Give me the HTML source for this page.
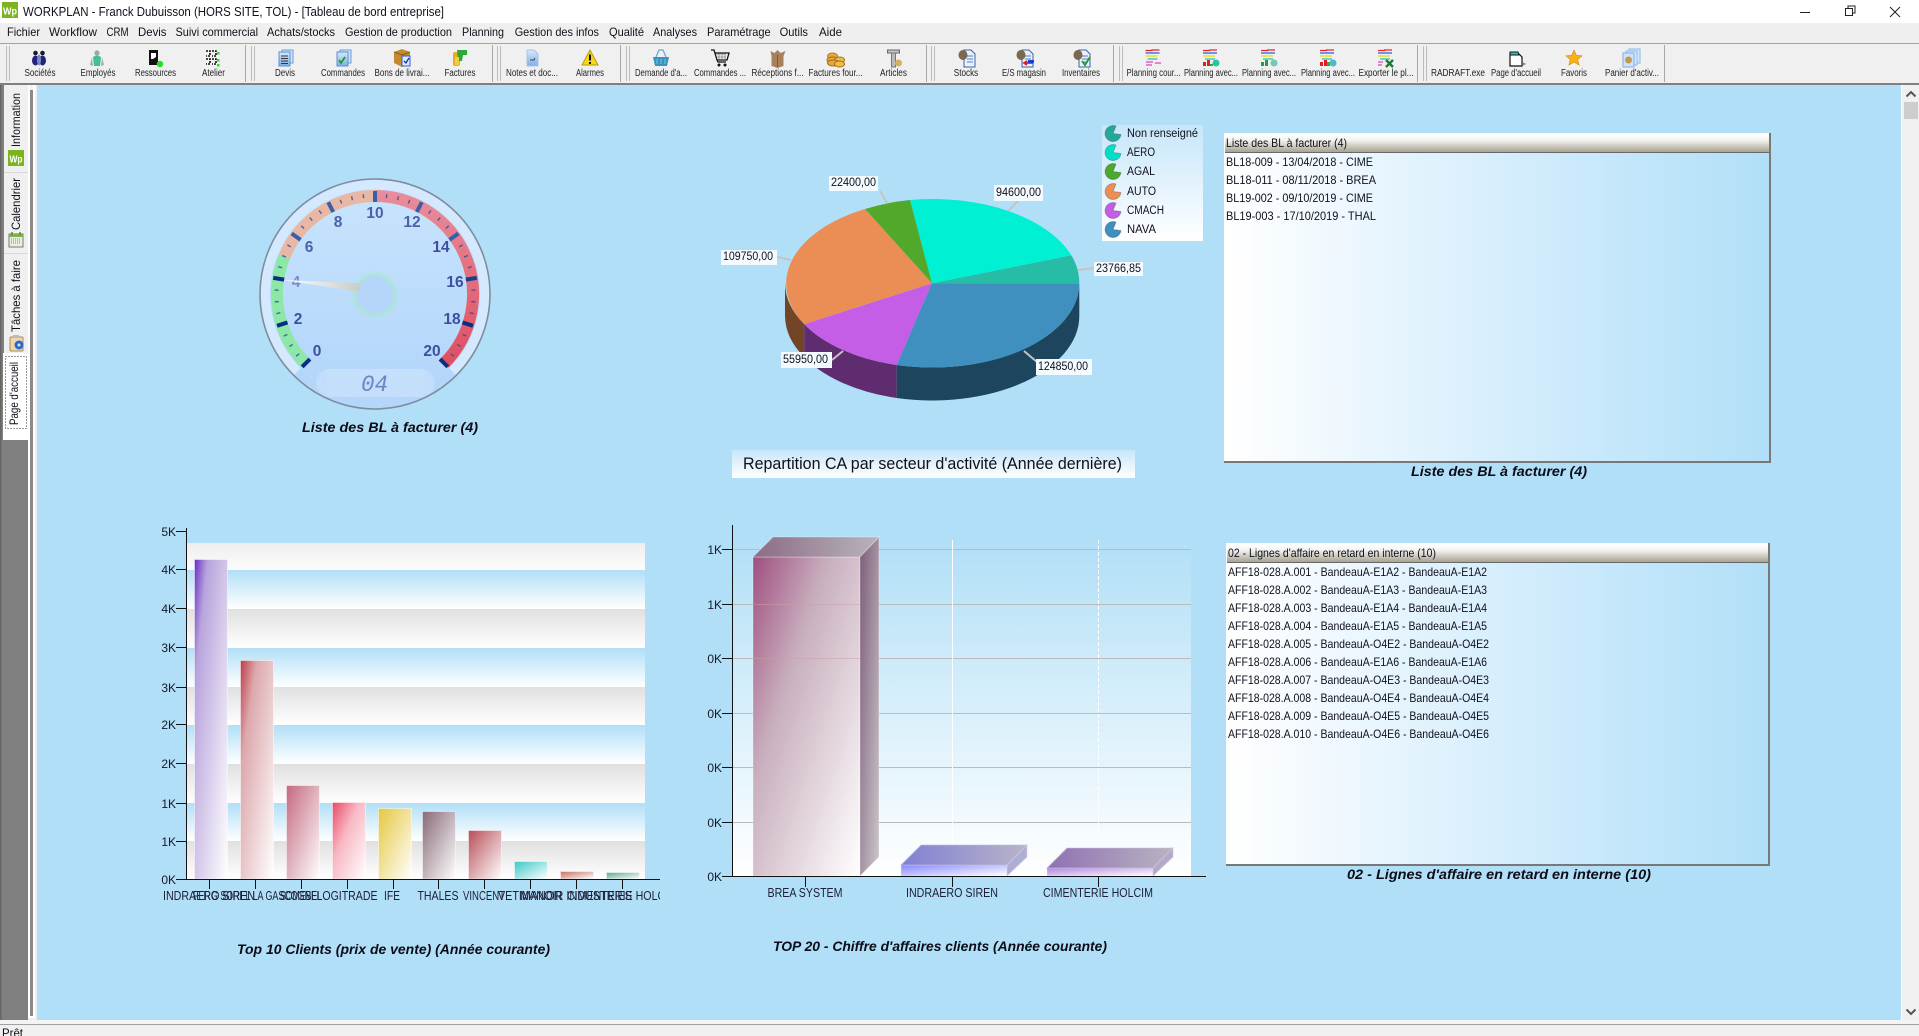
<!DOCTYPE html>
<html lang="fr"><head><meta charset="utf-8"><title>WORKPLAN - Tableau de bord entreprise</title>
<style>
html,body{margin:0;padding:0;background:#b1dff7;overflow:hidden}
svg{display:block}
text{font-family:"Liberation Sans",Arial,sans-serif;fill:#10101c}
.m{font-size:12px}
.t{font-size:10px;text-anchor:middle;fill:#222}
.l{font-size:12px}
.c{font-size:14px;font-weight:bold;font-style:italic;fill:#0c0c18}
.a{font-size:12px;text-anchor:end;fill:#181828}
.x{font-size:13px;text-anchor:middle;fill:#20203a}
.p{font-size:11.500px}
.g{font-size:15.500px;font-weight:bold;text-anchor:middle;fill:#3d50a0}
</style></head><body>
<svg xmlns="http://www.w3.org/2000/svg" width="1919" height="1036" viewBox="0 0 1919 1036">
<defs>
<linearGradient id="hdr" x1="0" y1="0" x2="0" y2="1"><stop offset="0" stop-color="#fff"/><stop offset=".35" stop-color="#f2f2f0"/><stop offset=".85" stop-color="#b8b4a4"/><stop offset="1" stop-color="#a8a498"/></linearGradient>
<linearGradient id="lst" x1="0" y1="0" x2="1" y2="0"><stop offset="0" stop-color="#fff"/><stop offset=".62" stop-color="#cdeafc"/><stop offset="1" stop-color="#b1dff7"/></linearGradient>
<linearGradient id="bw" x1="0" y1="0" x2="0" y2="1"><stop offset="0" stop-color="#c6e6fa"/><stop offset="1" stop-color="#fff"/></linearGradient>
<linearGradient id="gb" x1="0" y1="0" x2="0" y2="1"><stop offset="0" stop-color="#b1dff7"/><stop offset="1" stop-color="#fff"/></linearGradient>
<linearGradient id="gg" x1="0" y1="0" x2="0" y2="1"><stop offset="0" stop-color="#e0e0e0"/><stop offset="1" stop-color="#fff"/></linearGradient>
<linearGradient id="gg0" x1="0" y1="0" x2="0" y2="1"><stop offset="0" stop-color="#eeeeee"/><stop offset="1" stop-color="#fcfcfc"/></linearGradient>
<linearGradient id="b1" x1="0" y1="0" x2="1" y2="1"><stop offset="0" stop-color="#6a2fc4"/><stop offset=".2" stop-color="#b8a4dc"/><stop offset="1" stop-color="#fff"/></linearGradient>
<linearGradient id="b2" x1="0" y1="0" x2="1" y2="1"><stop offset="0" stop-color="#be3c48"/><stop offset=".25" stop-color="#dca8ac"/><stop offset="1" stop-color="#fff"/></linearGradient>
<linearGradient id="b3" x1="0" y1="0" x2="1" y2="1"><stop offset="0" stop-color="#c46a80"/><stop offset="1" stop-color="#fff"/></linearGradient>
<linearGradient id="b4" x1="0" y1="0" x2="1" y2="1"><stop offset="0" stop-color="#e84a68"/><stop offset=".4" stop-color="#f8b8c4"/><stop offset="1" stop-color="#fff"/></linearGradient>
<linearGradient id="b5" x1="0" y1="0" x2="1" y2="1"><stop offset="0" stop-color="#e4c840"/><stop offset="1" stop-color="#fff"/></linearGradient>
<linearGradient id="b6" x1="0" y1="0" x2="1" y2="1"><stop offset="0" stop-color="#886a78"/><stop offset="1" stop-color="#fff"/></linearGradient>
<linearGradient id="b7" x1="0" y1="0" x2="1" y2="1"><stop offset="0" stop-color="#b84f58"/><stop offset="1" stop-color="#fff"/></linearGradient>
<linearGradient id="b8" x1="0" y1="0" x2="1" y2="1"><stop offset="0" stop-color="#3cc8c8"/><stop offset="1" stop-color="#fff"/></linearGradient>
<linearGradient id="b9" x1="0" y1="0" x2="1" y2="1"><stop offset="0" stop-color="#c87060"/><stop offset="1" stop-color="#fff"/></linearGradient>
<linearGradient id="b10" x1="0" y1="0" x2="1" y2="1"><stop offset="0" stop-color="#60a890"/><stop offset="1" stop-color="#fff"/></linearGradient>
<linearGradient id="f1" x1="0" y1="0" x2="1" y2="1"><stop offset="0" stop-color="#a04f80"/><stop offset=".35" stop-color="#c8aebd"/><stop offset="1" stop-color="#fff"/></linearGradient>
<linearGradient id="t1" x1="0" y1="0" x2="1" y2="0"><stop offset="0" stop-color="#8c6c84"/><stop offset="1" stop-color="#b8b4bc"/></linearGradient>
<linearGradient id="s1" x1="0" y1="0" x2="1" y2="1"><stop offset="0" stop-color="#7c5c78"/><stop offset="1" stop-color="#ccc8cc"/></linearGradient>
<linearGradient id="f2" x1="0" y1="0" x2="1" y2="1"><stop offset="0" stop-color="#8888ff"/><stop offset="1" stop-color="#fff"/></linearGradient>
<linearGradient id="t2" x1="0" y1="0" x2="1" y2="0"><stop offset="0" stop-color="#8080d4"/><stop offset="1" stop-color="#b8b4c8"/></linearGradient>
<linearGradient id="f3" x1="0" y1="0" x2="1" y2="1"><stop offset="0" stop-color="#b088e0"/><stop offset="1" stop-color="#fff"/></linearGradient>
<linearGradient id="t3" x1="0" y1="0" x2="1" y2="0"><stop offset="0" stop-color="#9070b4"/><stop offset="1" stop-color="#b8b4c0"/></linearGradient>
<linearGradient id="red" gradientUnits="userSpaceOnUse" x1="0" y1="-100" x2="0" y2="75"><stop offset="0" stop-color="#e98d9b"/><stop offset="1" stop-color="#de4d5e"/></linearGradient>
<linearGradient id="face" x1="0" y1="0" x2="0" y2="1"><stop offset="0" stop-color="#c8e4fd"/><stop offset="1" stop-color="#b1d5fa"/></linearGradient>
<linearGradient id="ndl" x1="0" y1="0" x2="1" y2="0"><stop offset="0" stop-color="#fff"/><stop offset="1" stop-color="#c9cdc6"/></linearGradient>
<linearGradient id="docb" x1="0" y1="0" x2="0" y2="1"><stop offset="0" stop-color="#d5e8fb"/><stop offset="1" stop-color="#7fb0e6"/></linearGradient>
<clipPath id="cx"><rect x="150" y="880" width="510" height="30"/></clipPath>
<path id="pac" d="M0 0L3-7.4A8 8 0 1 0 8 1Z" stroke="#000" stroke-opacity=".2"/>
<rect id="mj" x="-2" y="-103" width="4" height="11"/>
<rect id="mn" x="-.7" y="-100.500" width="1.400" height="4"/>
<g id="stack"><rect x="-3" y="50" width="11" height="13" fill="#cfe2f8" stroke="#6d9fd8"/><rect x="-6" y="52" width="11" height="14" fill="url(#docb)" stroke="#5b8fd0"/></g>
<g id="plan"><path d="M-8 50.5h7M-2 50h8" stroke="#f02020" stroke-width="1.300"/><path d="M-8 53h5M-3 53h9" stroke="#2060e0" stroke-width="1.300"/><path d="M-8 56h12" stroke="#f0e020" stroke-width="1.500"/><path d="M-6 59h10" stroke="#20c8c0" stroke-width="1.300"/></g>
<g id="sdoc"><path d="M-2 50h7l4 4v13H-2z" fill="#e9f2fc" stroke="#3b62a8"/><path d="M1 56h6M1 59h6M1 62h6" stroke="#5a7cc0"/><ellipse cx="-3" cy="55" rx="4.500" ry="5" fill="#7a6850"/></g>
</defs>
<rect width="1919" height="1036" fill="#b1dff7"/>

<!-- title bar -->
<rect width="1919" height="23" fill="#fff"/>
<rect x="2" y="2" width="16" height="16" fill="#7ab51d"/>
<text x="3" y="14.5" style="font-size:10.5px;font-weight:bold;fill:#fff" textLength="14" lengthAdjust="spacingAndGlyphs">Wp</text>
<text x="23" y="16" style="font-size:12.5px" textLength="421" lengthAdjust="spacingAndGlyphs">WORKPLAN - Franck Dubuisson (HORS SITE, TOL) - [Tableau de bord entreprise]</text>
<path d="M1800 12.5h10" stroke="#222" stroke-width="1"/>
<path d="M1845.5 8.5h7v7h-7zM1848 8.5v-2.5h7v7h-2.5" fill="none" stroke="#222"/>
<path d="M1890 7l10 10M1900 7l-10 10" stroke="#222" stroke-width="1"/>

<!-- menu -->
<rect y="23" width="1919" height="20" fill="#efefef"/>
<rect y="43" width="1919" height="1" fill="#a4a4a4"/>
<g class="mn">
<text class="m" x="7" y="36" textLength="33" lengthAdjust="spacingAndGlyphs">Fichier</text>
<text class="m" x="49" y="36" textLength="48" lengthAdjust="spacingAndGlyphs">Workflow</text>
<text class="m" x="106.500" y="36" textLength="22" lengthAdjust="spacingAndGlyphs">CRM</text>
<text class="m" x="138" y="36" textLength="28.500" lengthAdjust="spacingAndGlyphs">Devis</text>
<text class="m" x="175.500" y="36" textLength="82.500" lengthAdjust="spacingAndGlyphs">Suivi commercial</text>
<text class="m" x="267" y="36" textLength="68" lengthAdjust="spacingAndGlyphs">Achats/stocks</text>
<text class="m" x="345" y="36" textLength="107" lengthAdjust="spacingAndGlyphs">Gestion de production</text>
<text class="m" x="462" y="36" textLength="42" lengthAdjust="spacingAndGlyphs">Planning</text>
<text class="m" x="514.700" y="36" textLength="84.300" lengthAdjust="spacingAndGlyphs">Gestion des infos</text>
<text class="m" x="609" y="36" textLength="35" lengthAdjust="spacingAndGlyphs">Qualité</text>
<text class="m" x="653" y="36" textLength="44" lengthAdjust="spacingAndGlyphs">Analyses</text>
<text class="m" x="707" y="36" textLength="63.600" lengthAdjust="spacingAndGlyphs">Paramétrage</text>
<text class="m" x="779.600" y="36" textLength="28.400" lengthAdjust="spacingAndGlyphs">Outils</text>
<text class="m" x="819" y="36" textLength="23" lengthAdjust="spacingAndGlyphs">Aide</text>
</g>

<!-- toolbar -->
<rect y="44" width="1919" height="39" fill="#f0f0f0"/>
<rect y="83" width="1919" height="2" fill="#808080"/>
<g fill="#a8a8a8">
<rect x="245" y="45" width="1" height="37"/><rect x="492" y="45" width="1" height="37"/><rect x="620" y="45" width="1" height="37"/><rect x="926" y="45" width="1" height="37"/><rect x="1113" y="45" width="1" height="37"/><rect x="1417" y="45" width="1" height="37"/><rect x="1664" y="45" width="1" height="37"/>
</g>
<g fill="#bcbcbc">
<rect x="6" y="46" width="1" height="35"/><rect x="9" y="46" width="1" height="35"/>
<rect x="251" y="46" width="1" height="35"/><rect x="254" y="46" width="1" height="35"/>
<rect x="497" y="46" width="1" height="35"/><rect x="500" y="46" width="1" height="35"/>
<rect x="626" y="46" width="1" height="35"/><rect x="629" y="46" width="1" height="35"/>
<rect x="931" y="46" width="1" height="35"/><rect x="934" y="46" width="1" height="35"/>
<rect x="1119" y="46" width="1" height="35"/><rect x="1122" y="46" width="1" height="35"/>
<rect x="1423" y="46" width="1" height="35"/><rect x="1426" y="46" width="1" height="35"/>
</g>

<!-- toolbar icons -->
<g transform="translate(39,0)"><ellipse cx="-3.500" cy="60.500" rx="3.500" ry="5" fill="#23237a"/><ellipse cx="3.500" cy="60.500" rx="3.500" ry="5" fill="#23237a"/><circle cx="-3.500" cy="53" r="2.300" fill="#1a1a2a"/><circle cx="3.500" cy="53" r="2.300" fill="#1a1a2a"/><ellipse cx="0" cy="60" rx="2" ry="5.500" fill="#7a8ac8"/></g>
<g transform="translate(97,0)"><circle cx="0" cy="53" r="2.600" fill="#9aa89e"/><path d="M-4 57q4-3 8 0l-1 9h-6z" fill="#3fbf9a"/><path d="M-5 57l-2 8 3 1zM5 57l2 8-3 1z" fill="#a8aca8"/></g>
<g transform="translate(155,0)"><path d="M-6 50h9v15h-9z" fill="#111"/><path d="M-4 53h5v4l-3 2h-2z" fill="#fff"/><circle cx="5" cy="64" r="3.200" fill="#28dd28"/></g>
<g transform="translate(213,0)" fill="none" stroke="#111" stroke-width="1.600"><path d="M-7 51h4v5h-4M-1 51h4v5h-4M-7 59h4v5h-4M-1 59h4v5h-4" stroke-dasharray="2 1"/><rect x="4" y="52" width="2.500" height="2.500" fill="#28dd28" stroke="none"/><rect x="4" y="59" width="2.500" height="2.500" fill="#28dd28" stroke="none"/><rect x="4" y="64" width="2.500" height="2.500" fill="#28dd28" stroke="none"/></g>
<g transform="translate(285,0)"><use href="#stack"/><path d="M-4 56h7M-4 58.500h7M-4 61h7M-4 63.500h7" stroke="#334"/></g>
<g transform="translate(343,0)"><use href="#stack"/><path d="M-4 60l2 3 4-6" fill="none" stroke="#1a9a2a" stroke-width="1.800"/></g>
<g transform="translate(402,0)"><path d="M-8 52l8-3 8 3v11l-8 4-8-4z" fill="#c48a30"/><path d="M-8 52l8 3 8-3" fill="none" stroke="#8a5c18"/><rect x="0" y="56" width="8" height="10" fill="#dfeafa" stroke="#3060c0"/><path d="M2 61l2 2 3-5" fill="none" stroke="#1030b0" stroke-width="1.300"/></g>
<g transform="translate(460,0)"><rect x="-7" y="52" width="7" height="14" rx="2" fill="#e6ad20"/><path d="M-3 50h10v5h-4l-1 6h-4z" fill="#2fa83a"/><rect x="-5" y="57" width="4" height="8" fill="#f4cc40"/></g>
<g transform="translate(532,0)"><path d="M-5 50h7l4 4v12H-5z" fill="url(#docb)" stroke="#a9c4e6"/><path d="M-2 60h4l1-2" fill="none" stroke="#445"/></g>
<g transform="translate(590,0)"><path d="M0 50L8 65H-8z" fill="#f6d816" stroke="#b89a10"/><rect x="-1" y="54.500" width="2" height="6" fill="#111"/><rect x="-1" y="62" width="2" height="2" fill="#111"/></g>
<g transform="translate(661,0)"><path d="M-8 57h16l-2 9H-6z" fill="#3a94c0"/><path d="M-5 57l3-7h4l3 7" fill="none" stroke="#6aaccc" stroke-width="1.300"/><path d="M-4 59v5M0 59v5M4 59v5" stroke="#7cc0e0"/></g>
<g transform="translate(720,0)"><path d="M-9 50h3l3 10h10l2-7H-5M-3 60l1 2h8" fill="none" stroke="#111" stroke-width="1.300"/><path d="M-4 54h10M-3 57h9M-1 53v7M2 53v7M5 53v7" stroke="#666" stroke-width=".6"/><circle cx="-1" cy="65" r="1.500" fill="#111"/><circle cx="5" cy="65" r="1.500" fill="#111"/></g>
<g transform="translate(777.500,0)"><path d="M-7 51l4 2 3-3 3 3 5-2-2 5v10l-6 2-6-2V56z" fill="#a8805a"/><path d="M0 55v12" stroke="#7a5a3c"/></g>
<g transform="translate(835.500,0)"><ellipse cx="-3" cy="56" rx="5" ry="3" fill="#e4a93a" stroke="#b8801c"/><ellipse cx="-3" cy="60" rx="5.500" ry="3" fill="#e4a93a" stroke="#a87018"/><ellipse cx="4" cy="60" rx="5" ry="3" fill="#eebc4a" stroke="#a87018"/><ellipse cx="-2" cy="63" rx="6" ry="3" fill="#e4a93a" stroke="#a87018"/><ellipse cx="4" cy="64" rx="5" ry="3" fill="#eebc4a" stroke="#a87018"/></g>
<g transform="translate(893.500,0)"><path d="M-6 50h12v3H-6z" fill="#c4c4c4" stroke="#666"/><path d="M-2 53h4v14h-4z" fill="#bbb" stroke="#777"/><circle cx="5" cy="63" r="3.500" fill="#d4b060"/></g>
<use href="#sdoc" x="966"/>
<g transform="translate(1024,0)"><use href="#sdoc"/><path d="M1 63h8M3 61l-3 2 3 2" stroke="#e02020" stroke-width="1.800" fill="none"/><rect x="4" y="60" width="6" height="3" fill="#1a40d0"/></g>
<g transform="translate(1081,0)"><use href="#sdoc"/><path d="M1 61l3 4 5-8" fill="none" stroke="#1c9a2a" stroke-width="1.800"/></g>
<use href="#plan" x="1153.500"/><path d="M1146 62h7M1146 65h6M1155 63h6" stroke="#e040c0" stroke-width="1.300"/>
<g transform="translate(1211,0)"><use href="#plan"/><path d="M-8 62h3v4h-3zM-4 60h3v6h-3z" fill="#e02020"/><path d="M-1 64h3v2h-3z" fill="#20b040"/><circle cx="5" cy="63" r="3.500" fill="#30c0a8"/></g>
<g transform="translate(1269,0)"><use href="#plan"/><path d="M-8 62h3v4h-3zM-4 60h3v6h-3z" fill="#20a040"/><circle cx="5" cy="63" r="3.500" fill="#70c8b8"/></g>
<g transform="translate(1328,0)"><use href="#plan"/><path d="M-8 62h3v4h-3zM-4 60h3v6h-3z" fill="#e02020"/><path d="M-1 62h3v4h-3z" fill="#20b040"/><circle cx="5" cy="63" r="3.500" fill="#50b8c8"/></g>
<g transform="translate(1386,0)"><use href="#plan"/><path d="M-8 62h5M-8 65h4" stroke="#e040c0" stroke-width="1.300"/><path d="M0 60l7 7M7 60l-7 7" stroke="#1c7a2a" stroke-width="2.400"/></g>
<g transform="translate(1516,0)"><path d="M-6 54h9l3 3v9h-12z" fill="#fff" stroke="#111" stroke-width="1.200"/><path d="M-6 52h8l1 3h-9z" fill="#20c8c8" stroke="#111"/><path d="M7 63l2 1-2 1" stroke="#777" fill="none"/></g>
<path d="M1574 50l2.300 5.300 5.700.500-4.300 3.700 1.400 5.600-5.100-3-5.100 3 1.400-5.600-4.300-3.700 5.700-.500z" fill="#f6b21a" stroke="#d88a10" stroke-width=".6"/>
<g transform="translate(1632,0)"><rect x="-3" y="49" width="11" height="14" fill="#d8e8fa" stroke="#8ab8ec"/><rect x="-6" y="51" width="11" height="14" fill="#d8e8fa" stroke="#8ab8ec"/><rect x="-9" y="53" width="11" height="14" fill="#cfe2f8" stroke="#7cace4"/><circle cx="-3.500" cy="60" r="3.500" fill="#c09a50"/></g>

<g>
<text class="t" x="40" y="76" textLength="31" lengthAdjust="spacingAndGlyphs">Sociétés</text>
<text class="t" x="98" y="76" textLength="35" lengthAdjust="spacingAndGlyphs">Employés</text>
<text class="t" x="155.500" y="76" textLength="41" lengthAdjust="spacingAndGlyphs">Ressources</text>
<text class="t" x="213.500" y="76" textLength="23" lengthAdjust="spacingAndGlyphs">Atelier</text>
<text class="t" x="285" y="76" textLength="20" lengthAdjust="spacingAndGlyphs">Devis</text>
<text class="t" x="343" y="76" textLength="44" lengthAdjust="spacingAndGlyphs">Commandes</text>
<text class="t" x="402" y="76" textLength="55" lengthAdjust="spacingAndGlyphs">Bons de livrai...</text>
<text class="t" x="460" y="76" textLength="31" lengthAdjust="spacingAndGlyphs">Factures</text>
<text class="t" x="532" y="76" textLength="52" lengthAdjust="spacingAndGlyphs">Notes et doc...</text>
<text class="t" x="590" y="76" textLength="28" lengthAdjust="spacingAndGlyphs">Alarmes</text>
<text class="t" x="661" y="76" textLength="52" lengthAdjust="spacingAndGlyphs">Demande d'a...</text>
<text class="t" x="720" y="76" textLength="52" lengthAdjust="spacingAndGlyphs">Commandes ...</text>
<text class="t" x="777.500" y="76" textLength="52" lengthAdjust="spacingAndGlyphs">Réceptions f...</text>
<text class="t" x="835.500" y="76" textLength="54" lengthAdjust="spacingAndGlyphs">Factures four...</text>
<text class="t" x="893.500" y="76" textLength="27" lengthAdjust="spacingAndGlyphs">Articles</text>
<text class="t" x="966" y="76" textLength="24.500" lengthAdjust="spacingAndGlyphs">Stocks</text>
<text class="t" x="1024" y="76" textLength="44" lengthAdjust="spacingAndGlyphs">E/S magasin</text>
<text class="t" x="1081" y="76" textLength="38" lengthAdjust="spacingAndGlyphs">Inventaires</text>
<text class="t" x="1153.500" y="76" textLength="54" lengthAdjust="spacingAndGlyphs">Planning cour...</text>
<text class="t" x="1211" y="76" textLength="54" lengthAdjust="spacingAndGlyphs">Planning avec...</text>
<text class="t" x="1269" y="76" textLength="54" lengthAdjust="spacingAndGlyphs">Planning avec...</text>
<text class="t" x="1328" y="76" textLength="54" lengthAdjust="spacingAndGlyphs">Planning avec...</text>
<text class="t" x="1386" y="76" textLength="55" lengthAdjust="spacingAndGlyphs">Exporter le pl...</text>
<text class="t" x="1458" y="76" textLength="54" lengthAdjust="spacingAndGlyphs">RADRAFT.exe</text>
<text class="t" x="1516" y="76" textLength="50" lengthAdjust="spacingAndGlyphs">Page d'accueil</text>
<text class="t" x="1574" y="76" textLength="26" lengthAdjust="spacingAndGlyphs">Favoris</text>
<text class="t" x="1632" y="76" textLength="54" lengthAdjust="spacingAndGlyphs">Panier d'activ...</text>
</g>

<!-- left tabs -->
<rect x="0" y="85" width="37" height="935" fill="#f0f0f0"/>
<rect x="0" y="85" width="28" height="935" fill="#808080"/>
<rect x="0" y="85" width="1.500" height="935" fill="#666"/>
<rect x="28" y="85" width="2" height="933" fill="#fff"/>
<rect x="30" y="90" width="3" height="926" fill="#8a8a8a"/>
<rect x="33" y="85" width="2" height="933" fill="#fff"/>
<rect x="28" y="1016" width="7" height="2" fill="#fff"/>
<rect x="4" y="85" width="24" height="268" fill="#f0f0f0"/>
<rect x="4" y="172" width="24" height="1" fill="#d8d8d8"/>
<rect x="4" y="253" width="24" height="1" fill="#d8d8d8"/>
<rect x="3" y="353" width="26" height="87" fill="#fff"/>
<rect x="5.500" y="356.500" width="21" height="72" fill="none" stroke="#333" stroke-dasharray="1 2"/>
<text class="l" transform="translate(20,147) rotate(-90)" textLength="54" lengthAdjust="spacingAndGlyphs">Information</text>
<text class="l" transform="translate(20,230) rotate(-90)" textLength="52" lengthAdjust="spacingAndGlyphs">Calendrier</text>
<text class="l" transform="translate(20,332) rotate(-90)" textLength="72" lengthAdjust="spacingAndGlyphs">Tâches à faire</text>
<text class="l" transform="translate(18,425) rotate(-90)" textLength="63" lengthAdjust="spacingAndGlyphs">Page d'accueil</text>
<rect x="8" y="150" width="16" height="16" fill="#7ab51d"/>
<text x="9.500" y="162.500" style="font-size:10px;font-weight:bold;fill:#fff" textLength="13" lengthAdjust="spacingAndGlyphs">Wp</text>
<rect x="9" y="234" width="14" height="13" fill="#e8f0e4" stroke="#777"/><rect x="9" y="234" width="14" height="3" fill="#7fb050"/><path d="M11 239h10M11 241h10M11 243h10" stroke="#8a8a8a" stroke-dasharray="1 1"/><path d="M12 232v3M20 232v3" stroke="#5a8a3a" stroke-width="1.500"/>
<rect x="10" y="337" width="13" height="14" rx="1" fill="#eed6a8" stroke="#a88a5a"/><rect x="13" y="335" width="6" height="3" fill="#b8b8c8"/><circle cx="19" cy="345" r="4.500" fill="#2a6ac8"/><circle cx="19" cy="345" r="1.500" fill="#cfe2fa"/>

<!-- scrollbar and bottom -->
<rect x="1901" y="85" width="18" height="935" fill="#f0f0f0"/>
<rect x="1901" y="85" width="1" height="935" fill="#fff"/>
<rect x="1904" y="102" width="14" height="17" fill="#cdcdcd"/>
<path d="M1906.500 96.500l4.500-4.500 4.500 4.500" fill="none" stroke="#555" stroke-width="2"/>
<path d="M1906.500 1009.500l4.500 4.500 4.500-4.500" fill="none" stroke="#555" stroke-width="2"/>
<rect y="1020" width="1919" height="4" fill="#f4f4f4"/>
<rect y="1024" width="1919" height="1" fill="#a0a0a0"/>
<rect y="1025" width="1919" height="11" fill="#f0f0f0"/>
<text x="2" y="1037" style="font-size:12px" textLength="21" lengthAdjust="spacingAndGlyphs">Prêt</text>

<!-- gauge -->
<circle cx="375" cy="294" r="115" fill="#d4e9fe"/>
<circle cx="375" cy="294" r="105" fill="url(#face)"/>
<path d="M297.200 371.800A110 110 0 0 0 452.800 371.800" fill="none" stroke="#b3d6fa" stroke-width="10"/>
<circle cx="375" cy="294" r="115" fill="none" stroke="#7d8c9e" stroke-width="1.600"/>
<g transform="translate(375,294)">
<g fill="none" stroke-width="12">
<path d="M-69.300 69.300A98 98 0 0 1-90.500-37.500" stroke="#8de8a8"/>
<path d="M-90.500-37.500A98 98 0 0 1 0-98" stroke="#e8b8a4"/>
<path d="M0-98A98 98 0 0 1 69.300 69.300" stroke="url(#red)"/>
</g>
<g fill="#0a2e84">
<use href="#mj" transform="rotate(-135)"/><use href="#mj" transform="rotate(-108)"/><use href="#mj" transform="rotate(-81)"/>
<use href="#mj" transform="rotate(108)"/><use href="#mj" transform="rotate(135)"/><use href="#mj" transform="rotate(81)" fill="#17408f"/>
</g>
<g fill="#3a5faa">
<use href="#mj" transform="rotate(-54)"/><use href="#mj" transform="rotate(-27)"/><use href="#mj" transform="rotate(0)"/><use href="#mj" transform="rotate(27)"/><use href="#mj" transform="rotate(54)"/>
</g>
<g fill="#2a4a9c" fill-opacity=".8">
<use href="#mn" transform="rotate(-128.250)"/><use href="#mn" transform="rotate(-121.500)"/><use href="#mn" transform="rotate(-114.750)"/>
<use href="#mn" transform="rotate(-101.250)"/><use href="#mn" transform="rotate(-94.500)"/><use href="#mn" transform="rotate(-87.750)"/>
<use href="#mn" transform="rotate(-74.250)"/><use href="#mn" transform="rotate(-67.500)"/><use href="#mn" transform="rotate(-60.750)"/>
<use href="#mn" transform="rotate(-47.250)"/><use href="#mn" transform="rotate(-40.500)"/><use href="#mn" transform="rotate(-33.750)"/>
<use href="#mn" transform="rotate(-20.250)"/><use href="#mn" transform="rotate(-13.500)"/><use href="#mn" transform="rotate(-6.750)"/>
<use href="#mn" transform="rotate(6.750)"/><use href="#mn" transform="rotate(13.500)"/><use href="#mn" transform="rotate(20.250)"/>
<use href="#mn" transform="rotate(33.750)"/><use href="#mn" transform="rotate(40.500)"/><use href="#mn" transform="rotate(47.250)"/>
<use href="#mn" transform="rotate(60.750)"/><use href="#mn" transform="rotate(67.500)"/><use href="#mn" transform="rotate(74.250)"/>
<use href="#mn" transform="rotate(87.750)"/><use href="#mn" transform="rotate(94.500)"/><use href="#mn" transform="rotate(101.250)"/>
<use href="#mn" transform="rotate(114.750)"/><use href="#mn" transform="rotate(121.500)"/><use href="#mn" transform="rotate(128.250)"/>
</g>
</g>
<g>
<text class="g" x="317" y="356">0</text><text class="g" x="298" y="324">2</text><text class="g" x="296" y="287" style="fill:#7f8fc4">4</text><text class="g" x="309" y="252" style="fill:#4a62a8">6</text><text class="g" x="338" y="227" style="fill:#4a62a8">8</text><text class="g" x="375" y="218" style="fill:#4a62a8">10</text><text class="g" x="412" y="227" style="fill:#4a62a8">12</text><text class="g" x="441" y="252" style="fill:#3d50a0">14</text><text class="g" x="455" y="287">16</text><text class="g" x="452" y="324">18</text><text class="g" x="432" y="356">20</text>
</g>
<circle cx="375" cy="295" r="20.300" fill="#b5d5fb" stroke="#a8e8cc" stroke-opacity=".45" stroke-width="6"/>
<path d="M283 280L360 283.300V291.700Z" fill="url(#ndl)"/>
<rect x="316" y="369" width="119" height="28" rx="14" fill="#fff" fill-opacity=".18"/>
<rect x="327" y="369" width="97" height="28" fill="#fff" fill-opacity=".07"/>
<text x="361" y="391" style="font-family:'Liberation Mono',monospace;font-size:23px;font-style:italic;fill:#5a74ba;fill-opacity:.85" textLength="27" lengthAdjust="spacingAndGlyphs">04</text>
<text class="c" x="302" y="432" textLength="176" lengthAdjust="spacingAndGlyphs">Liste des BL à facturer (4)</text>

<!-- pie -->
<path d="M785 283.300V316.300A147 84.300 0 0 0 804.300 357.300V324.300A147 84.300 0 0 1 785 283.300Z" fill="#734526"/>
<path d="M804.300 324.300V357.300A147 84.300 0 0 0 896.700 398V365A147 84.300 0 0 1 804.300 324.300Z" fill="#5f2c70"/>
<path d="M896.700 365V398A147 84.300 0 0 0 1079.300 316.300V283.300A147 84.300 0 0 1 896.700 365Z" fill="#1d465e"/>
<path d="M932 283.300L1079.300 283.300A147 84.300 0 0 0 1071.300 255.300Z" fill="#26bca5"/>
<path d="M932 283.300L1071.300 255.300A147 84.300 0 0 0 910 200Z" fill="#00f0d4"/>
<path d="M932 283.300L910 200A147 84.300 0 0 0 865 209Z" fill="#52a82a"/>
<path d="M932 283.300L865 209A147 84.300 0 0 0 804.300 324.300Z" fill="#ea8e56"/>
<path d="M932 283.300L804.300 324.300A147 84.300 0 0 0 896.700 365Z" fill="#c45ee6"/>
<path d="M932 283.300L896.700 365A147 84.300 0 0 0 1079.300 283.300Z" fill="#3f8fbf"/>
<g stroke="#c4c4c4" stroke-width="2" fill="none"><path d="M1078 270l16-2"/><path d="M1008 211l11-11"/><path d="M887 203l-7-12"/><path d="M791 260l-14-3"/><path d="M843 351l-11 9"/><path d="M1024 351l13 11"/></g>
<g fill="#f4fbff"><rect x="1094" y="262" width="49" height="14"/><rect x="994" y="185" width="49" height="16"/><rect x="829" y="176" width="49" height="15"/><rect x="721" y="250" width="56" height="15"/><rect x="781" y="352" width="51" height="16"/><rect x="1036" y="359" width="56" height="16"/></g>
<g>
<text class="p" x="1096" y="272" textLength="45" lengthAdjust="spacingAndGlyphs">23766,85</text>
<text class="p" x="996" y="196" textLength="45" lengthAdjust="spacingAndGlyphs">94600,00</text>
<text class="p" x="831" y="186" textLength="45" lengthAdjust="spacingAndGlyphs">22400,00</text>
<text class="p" x="723" y="260" textLength="50" lengthAdjust="spacingAndGlyphs">109750,00</text>
<text class="p" x="783" y="363" textLength="45" lengthAdjust="spacingAndGlyphs">55950,00</text>
<text class="p" x="1038" y="370" textLength="50" lengthAdjust="spacingAndGlyphs">124850,00</text>
</g>
<rect x="1102" y="125" width="101" height="116" fill="url(#bw)"/>
<use href="#pac" x="1113" y="133.500" fill="#26a898"/><use href="#pac" x="1113" y="152.500" fill="#00e0c8"/><use href="#pac" x="1113" y="171.500" fill="#4ea82a"/><use href="#pac" x="1113" y="191.500" fill="#ea8e56"/><use href="#pac" x="1113" y="210.500" fill="#c45ee6"/><use href="#pac" x="1113" y="229.500" fill="#3f8fbf"/>
<g>
<text class="p" x="1127" y="137" textLength="71" lengthAdjust="spacingAndGlyphs">Non renseigné</text>
<text class="p" x="1127" y="156" textLength="28" lengthAdjust="spacingAndGlyphs">AERO</text>
<text class="p" x="1127" y="175" textLength="28" lengthAdjust="spacingAndGlyphs">AGAL</text>
<text class="p" x="1127" y="195" textLength="29" lengthAdjust="spacingAndGlyphs">AUTO</text>
<text class="p" x="1127" y="214" textLength="37" lengthAdjust="spacingAndGlyphs">CMACH</text>
<text class="p" x="1127" y="233" textLength="29" lengthAdjust="spacingAndGlyphs">NAVA</text>
</g>
<rect x="732" y="450" width="403" height="28" fill="url(#bw)"/>
<text x="743" y="469" style="font-size:16.500px" textLength="379" lengthAdjust="spacingAndGlyphs">Repartition CA par secteur d'activité (Année dernière)</text>

<!-- lists -->
<rect x="1224" y="133" width="547" height="330" fill="#fff"/>
<rect x="1225" y="153" width="544" height="308" fill="url(#lst)"/>
<rect x="1225" y="134" width="544" height="18" fill="url(#hdr)"/>
<rect x="1225" y="152" width="544" height="1" fill="#686868"/>
<rect x="1769" y="133" width="2" height="330" fill="#787878"/>
<rect x="1224" y="461" width="547" height="2" fill="#787878"/>
<text class="l" x="1226" y="147" textLength="121" lengthAdjust="spacingAndGlyphs">Liste des BL à facturer (4)</text>
<g>
<text class="l" x="1226" y="166" textLength="147" lengthAdjust="spacingAndGlyphs">BL18-009 - 13/04/2018 - CIME</text>
<text class="l" x="1226" y="184" textLength="150" lengthAdjust="spacingAndGlyphs">BL18-011 - 08/11/2018 - BREA</text>
<text class="l" x="1226" y="202" textLength="147" lengthAdjust="spacingAndGlyphs">BL19-002 - 09/10/2019 - CIME</text>
<text class="l" x="1226" y="220" textLength="150" lengthAdjust="spacingAndGlyphs">BL19-003 - 17/10/2019 - THAL</text>
</g>
<text class="c" x="1411" y="476" textLength="176" lengthAdjust="spacingAndGlyphs">Liste des BL à facturer (4)</text>

<rect x="1226" y="543" width="544" height="323" fill="#fff"/>
<rect x="1227" y="563" width="541" height="301" fill="url(#lst)"/>
<rect x="1227" y="544" width="541" height="18" fill="url(#hdr)"/>
<rect x="1227" y="562" width="541" height="1" fill="#686868"/>
<rect x="1768" y="543" width="2" height="323" fill="#787878"/>
<rect x="1226" y="864" width="544" height="2" fill="#787878"/>
<text class="l" x="1228" y="557" textLength="208" lengthAdjust="spacingAndGlyphs">02 - Lignes d'affaire en retard en interne (10)</text>
<g>
<text class="l" x="1228" y="576" textLength="259" lengthAdjust="spacingAndGlyphs">AFF18-028.A.001 - BandeauA-E1A2 - BandeauA-E1A2</text>
<text class="l" x="1228" y="594" textLength="259" lengthAdjust="spacingAndGlyphs">AFF18-028.A.002 - BandeauA-E1A3 - BandeauA-E1A3</text>
<text class="l" x="1228" y="612" textLength="259" lengthAdjust="spacingAndGlyphs">AFF18-028.A.003 - BandeauA-E1A4 - BandeauA-E1A4</text>
<text class="l" x="1228" y="630" textLength="259" lengthAdjust="spacingAndGlyphs">AFF18-028.A.004 - BandeauA-E1A5 - BandeauA-E1A5</text>
<text class="l" x="1228" y="648" textLength="261" lengthAdjust="spacingAndGlyphs">AFF18-028.A.005 - BandeauA-O4E2 - BandeauA-O4E2</text>
<text class="l" x="1228" y="666" textLength="259" lengthAdjust="spacingAndGlyphs">AFF18-028.A.006 - BandeauA-E1A6 - BandeauA-E1A6</text>
<text class="l" x="1228" y="684" textLength="261" lengthAdjust="spacingAndGlyphs">AFF18-028.A.007 - BandeauA-O4E3 - BandeauA-O4E3</text>
<text class="l" x="1228" y="702" textLength="261" lengthAdjust="spacingAndGlyphs">AFF18-028.A.008 - BandeauA-O4E4 - BandeauA-O4E4</text>
<text class="l" x="1228" y="720" textLength="261" lengthAdjust="spacingAndGlyphs">AFF18-028.A.009 - BandeauA-O4E5 - BandeauA-O4E5</text>
<text class="l" x="1228" y="738" textLength="261" lengthAdjust="spacingAndGlyphs">AFF18-028.A.010 - BandeauA-O4E6 - BandeauA-O4E6</text>
</g>
<text class="c" x="1347" y="879" textLength="304" lengthAdjust="spacingAndGlyphs">02 - Lignes d'affaire en retard en interne (10)</text>

<!-- bar chart 1 -->
<rect x="187" y="543" width="458" height="27" fill="url(#gg0)"/>
<rect x="187" y="570" width="458" height="39" fill="url(#gb)"/>
<rect x="187" y="609" width="458" height="39" fill="url(#gg)"/>
<rect x="187" y="648" width="458" height="39" fill="url(#gb)"/>
<rect x="187" y="687" width="458" height="38" fill="url(#gg)"/>
<rect x="187" y="725" width="458" height="39" fill="url(#gb)"/>
<rect x="187" y="764" width="458" height="39" fill="url(#gg)"/>
<rect x="187" y="803" width="458" height="38" fill="url(#gb)"/>
<rect x="187" y="841" width="458" height="38" fill="url(#gg)"/>
<g stroke="#fff" stroke-opacity=".45">
<rect x="194.500" y="559.500" width="33" height="319.500" fill="url(#b1)"/>
<rect x="240.500" y="660.500" width="33" height="218.500" fill="url(#b2)"/>
<rect x="286.500" y="785.500" width="33" height="93.500" fill="url(#b3)"/>
<rect x="332.500" y="802.500" width="33" height="76.500" fill="url(#b4)"/>
<rect x="378.500" y="808.500" width="33" height="70.500" fill="url(#b5)"/>
<rect x="422.500" y="811.500" width="33" height="67.500" fill="url(#b6)"/>
<rect x="468.500" y="830.500" width="33" height="48.500" fill="url(#b7)"/>
<rect x="514.500" y="861.500" width="33" height="17.500" fill="url(#b8)"/>
<rect x="560.500" y="871.500" width="33" height="7.500" fill="url(#b9)"/>
<rect x="606.500" y="872.500" width="33" height="6.500" fill="url(#b10)"/>
</g>
<g stroke="#111" stroke-width="1" fill="none">
<path d="M186.500 528V879.500H660"/>
<path d="M176 531.500h10M176 569.500h10M176 608.500h10M176 647.500h10M176 687.500h10M176 724.500h10M176 763.500h10M176 803.500h10M176 841.500h10M176 879.500h10"/>
<path d="M209.500 880v9M255.500 880v9M301.500 880v9M347.500 880v9M393.500 880v9M438.500 880v9M484.500 880v9M530.500 880v9M576.500 880v9M622.500 880v9"/>
</g>
<g>
<text class="a" x="176" y="536">5K</text><text class="a" x="176" y="574">4K</text><text class="a" x="176" y="613">4K</text><text class="a" x="176" y="652">3K</text><text class="a" x="176" y="692">3K</text><text class="a" x="176" y="729">2K</text><text class="a" x="176" y="768">2K</text><text class="a" x="176" y="808">1K</text><text class="a" x="176" y="846">1K</text><text class="a" x="176" y="884">0K</text>
</g>
<g clip-path="url(#cx)">
<text class="x" x="209" y="900" textLength="92" lengthAdjust="spacingAndGlyphs">INDRAERO SIREN</text>
<text class="x" x="255" y="900" textLength="124" lengthAdjust="spacingAndGlyphs">FERG SOREL LA GASCOGNE</text>
<text class="x" x="301" y="900" textLength="42" lengthAdjust="spacingAndGlyphs">SOMEBEL</text>
<text class="x" x="347" y="900" textLength="61" lengthAdjust="spacingAndGlyphs">LOGITRADE</text>
<text class="x" x="392" y="900" textLength="16" lengthAdjust="spacingAndGlyphs">IFE</text>
<text class="x" x="438" y="900" textLength="41" lengthAdjust="spacingAndGlyphs">THALES</text>
<text class="x" x="484" y="900" textLength="42" lengthAdjust="spacingAndGlyphs">VINCENT</text>
<text class="x" x="530" y="900" textLength="64" lengthAdjust="spacingAndGlyphs">VETIMANOR</text>
<text class="x" x="576" y="900" textLength="112" lengthAdjust="spacingAndGlyphs">MANOIR INDUSTRIES</text>
<text class="x" x="622" y="900" textLength="110" lengthAdjust="spacingAndGlyphs">CIMENTERIE HOLCIM</text>
</g>
<text class="c" x="237" y="954" textLength="313" lengthAdjust="spacingAndGlyphs">Top 10 Clients (prix de vente) (Année courante)</text>

<!-- bar chart 2 -->
<rect x="733" y="540" width="458" height="336" fill="url(#gb)"/>
<g stroke="#bbb" stroke-width="1"><path d="M733 549.500H1191M733 604.500H1191M733 658.500H1191M733 713.500H1191M733 767.500H1191M733 822.500H1191"/></g>
<path d="M952.500 540V845" stroke="#fff" stroke-width="1"/>
<path d="M1098.500 540V848" stroke="#fff" stroke-width="1" stroke-dasharray="4 2"/>
<rect x="753" y="557" width="107" height="319" fill="url(#f1)" stroke="#fff" stroke-opacity=".3"/>
<path d="M753 557L773 537H879L860 557Z" fill="url(#t1)" stroke="#fff" stroke-opacity=".3"/>
<path d="M860 557L879 537V857L860 876Z" fill="url(#s1)" stroke="#fff" stroke-opacity=".3"/>
<path d="M753 604.500H860M753 658.500H860" stroke="#c8a0a8" stroke-opacity=".5"/>
<rect x="901" y="865" width="106" height="11" fill="url(#f2)" stroke="#fff" stroke-opacity=".3"/>
<path d="M901 865L921 845H1027L1007 865Z" fill="url(#t2)" stroke="#c0c0e0" stroke-opacity=".6"/>
<path d="M1007 865L1027 845V857L1007 876Z" fill="#aeaed2" stroke="#d0d0e8" stroke-opacity=".6"/>
<rect x="1047" y="868" width="106" height="8" fill="url(#f3)" stroke="#fff" stroke-opacity=".3"/>
<path d="M1047 868L1067 848H1173L1153 868Z" fill="url(#t3)" stroke="#c8c0d8" stroke-opacity=".6"/>
<path d="M1153 868L1173 848V857L1153 876Z" fill="#b4aac8" stroke="#d0c8e0" stroke-opacity=".6"/>
<g stroke="#111" fill="none">
<path d="M732.500 525V876.500H1206"/>
<path d="M722 549.500h10M722 604.500h10M722 658.500h10M722 713.500h10M722 767.500h10M722 822.500h10M722 876.500h10"/>
<path d="M805.500 877v10M952.500 877v10M1098.500 877v10"/>
</g>
<g>
<text class="a" x="722" y="554">1K</text><text class="a" x="722" y="609">1K</text><text class="a" x="722" y="663">0K</text><text class="a" x="722" y="718">0K</text><text class="a" x="722" y="772">0K</text><text class="a" x="722" y="827">0K</text><text class="a" x="722" y="881">0K</text>
</g>
<text class="x" x="805" y="897" textLength="75" lengthAdjust="spacingAndGlyphs">BREA SYSTEM</text>
<text class="x" x="952" y="897" textLength="92" lengthAdjust="spacingAndGlyphs">INDRAERO SIREN</text>
<text class="x" x="1098" y="897" textLength="110" lengthAdjust="spacingAndGlyphs">CIMENTERIE HOLCIM</text>
<text class="c" x="773" y="951" textLength="334" lengthAdjust="spacingAndGlyphs">TOP 20 - Chiffre d'affaires clients (Année courante)</text>
</svg>
</body></html>
